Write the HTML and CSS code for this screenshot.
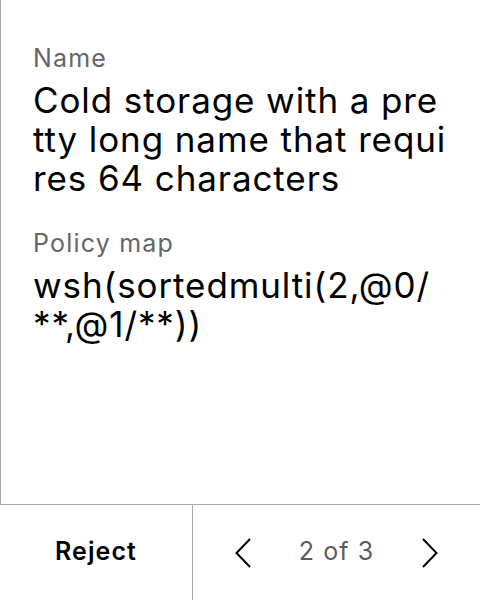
FILE: index.html
```html
<!DOCTYPE html>
<html>
<head>
<meta charset="utf-8">
<link rel="stylesheet" href="styles.css">
</head>
<body>
<div class="screen">
  <div class="content">
    <div class="field">
      <div class="label">Name</div>
      <div class="value">Cold storage with a pretty long name that requires 64 characters</div>
    </div>
    <div class="field">
      <div class="label">Policy map</div>
      <div class="value">wsh(sortedmulti(2,@0/**,@1/**))</div>
    </div>
  </div>
  <div class="footer">
    <div class="reject"><span class="btn-text">Reject</span></div>
    <div class="pager">
      <svg class="chev" width="16" height="30" viewBox="0 0 16 30"><path d="M15 1 L1.5 15 L15 29" fill="none" stroke="#000" stroke-width="2"/></svg>
      <span class="count">2 of 3</span>
      <svg class="chev" width="16" height="30" viewBox="0 0 16 30"><path d="M1 1 L14.5 15 L1 29" fill="none" stroke="#000" stroke-width="2"/></svg>
    </div>
  </div>
</div>
</body>
</html>
```
FILE: styles.css
```css
html, body {
  margin: 0;
  padding: 0;
  background: #fff;
}
.screen {
  width: 480px;
  height: 600px;
  display: flex;
  flex-direction: column;
  font-family: Inter, "Noto Sans", sans-serif;
}
.content {
  flex: 1;
  border-left: 1px solid #a8a8a8;
  padding: 43px 32px 0 32px;
  display: flex;
  flex-direction: column;
  gap: 30px;
}
.field {
  display: flex;
  flex-direction: column;
  gap: 8px;
}
.label {
  font-size: 25px;
  line-height: 30px;
  letter-spacing: 1.2px;
  color: #666;
}
.value {
  font-size: 35px;
  line-height: 39px;
  letter-spacing: 0.9px;
  color: #000;
  word-break: break-all;
}
.footer {
  height: 95px;
  flex: none;
  border-top: 1px solid #a8a8a8;
  display: flex;
}
.reject {
  width: 192px;
  border-right: 1px solid #a8a8a8;
  display: flex;
  align-items: center;
  justify-content: center;
}
.btn-text {
  font-size: 25px;
  line-height: 30px;
  font-weight: 600;
  letter-spacing: 1.1px;
  color: #000;
  padding-bottom: 3px;
}
.pager {
  flex: 1;
  display: flex;
  align-items: center;
  justify-content: center;
  gap: 48px;
}
.count {
  font-size: 25px;
  line-height: 30px;
  letter-spacing: 1.1px;
  color: #5c5c5c;
  padding-bottom: 3px;
}
.chev {
  display: block;
}
```
